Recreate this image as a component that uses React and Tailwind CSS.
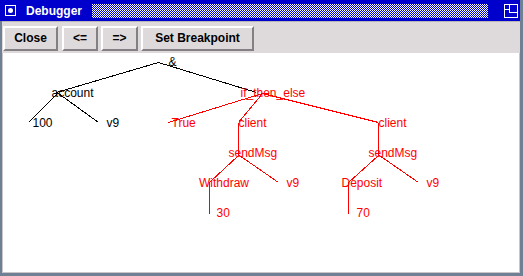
import React from "react";

const OX = 3;
const OY = 53;

const blackLines = [
  [158, 62, 56, 92],
  [158, 62, 256, 92],
  [57, 93, 28, 122],
  [58, 93, 98, 122],
];
const redLines = [
  [262, 93, 168, 122],
  [262, 93, 238, 122],
  [262, 93, 378, 122],
  [238, 122, 238, 155],
  [378, 122, 378, 155],
  [238, 155, 209, 182],
  [239, 155, 278, 182],
  [209, 182, 209, 213],
  [378, 155, 348, 182],
  [379, 155, 418, 182],
  [348, 182, 348, 213],
];
const labels = [
  ["&", 168, 65, "#000"],
  ["account", 51, 96, "#000"],
  ["if_then_else", 240, 96, "#f00"],
  ["100", 32, 126, "#000"],
  ["v9", 106, 126, "#000"],
  ["True", 171, 126, "#f00"],
  ["client", 238, 126, "#f00"],
  ["client", 378, 126, "#f00"],
  ["sendMsg", 228, 156, "#f00"],
  ["sendMsg", 368, 156, "#f00"],
  ["Withdraw", 198.5, 186, "#f00"],
  ["v9", 286, 186, "#f00"],
  ["Deposit", 341, 186, "#f00"],
  ["v9", 426, 186, "#f00"],
  ["30", 216, 216, "#f00"],
  ["70", 356, 216, "#f00"],
];

function Btn({ children, cls }) {
  return (
    <div
      className={`${cls} h-[25px] flex items-center justify-center bg-[#dedadc] border-t-2 border-l-2 border-t-white border-l-white border-b-2 border-r-2 border-b-[#838083] border-r-[#838083] text-[12px] font-bold text-black`}
      style={{ fontFamily: '"Liberation Sans", Arial, sans-serif' }}
    >
      {children}
    </div>
  );
}

export default function App() {
  return (
    <div
      className="w-[523px] h-[276px] bg-[#6f8094] flex flex-col overflow-hidden"
      style={{ fontFamily: '"Liberation Sans", Arial, sans-serif' }}
    >
      {/* title bar */}
      <div className="h-[21px] mr-[3px] bg-[#0000cc] flex items-center">
        <div className="ml-[5px] w-[11px] h-[11px] border border-white flex items-center justify-center">
          <div className="w-[5px] h-[5px] rounded-full bg-white" />
        </div>
        <div className="ml-[10px] text-white text-[12px] font-bold leading-none">
          Debugger
        </div>
        <div className="ml-[10px] h-[14px] flex-1 bg-[repeating-conic-gradient(#0000cc_0_25%,#ffffff_0_50%)] bg-[length:2px_2px]" />
        <div className="ml-[16px] mr-[2px] w-[14px] h-[14px]">
          <svg width="14" height="14" viewBox="0 0 14 14" shapeRendering="crispEdges">
            <rect x="0.5" y="0.5" width="13" height="13" fill="none" stroke="#fff" />
            <path d="M5.5 1 V8.5 H13" fill="none" stroke="#fff" />
            <path d="M1 5.5 H5" fill="none" stroke="#fff" />
          </svg>
        </div>
      </div>
      {/* body */}
      <div className="flex-1 ml-[2px] mr-[3px] mb-[3px] border-t border-[#b9b6b9] flex flex-col bg-[#dedadc]">
        <div className="h-[31px] flex items-center pl-[1px] pt-[1px]">
          <Btn cls="w-[55px]">Close</Btn>
          <Btn cls="w-[36px] ml-[4px]">&lt;=</Btn>
          <Btn cls="w-[37px] ml-[3px]">=&gt;</Btn>
          <Btn cls="w-[113px] ml-[3px]">Set Breakpoint</Btn>
        </div>
        <div className="flex-1 relative bg-white border-l border-b border-r border-[#c9c6c9]">
          <svg
            className="absolute left-0 top-0"
            width="520"
            height="222"
            viewBox={`${OX - 0.5} ${OY - 0.5} 520 222`}
          >
            {blackLines.map(([x1, y1, x2, y2], i) => (
              <line key={"b" + i} x1={x1} y1={y1} x2={x2} y2={y2} stroke="#000" strokeWidth="1" shapeRendering="crispEdges" />
            ))}
            {redLines.map(([x1, y1, x2, y2], i) => (
              <line key={"r" + i} x1={x1} y1={y1} x2={x2} y2={y2} stroke="#f00" strokeWidth="1" shapeRendering="crispEdges" />
            ))}
            {labels.map(([t, x, y, c], i) => (
              <text
                key={"t" + i}
                x={x}
                y={y}
                fill={c}
                fontSize="12"
                fontFamily='"Liberation Sans", Arial, sans-serif'
              >
                {t}
              </text>
            ))}
          </svg>
        </div>
      </div>
    </div>
  );
}
